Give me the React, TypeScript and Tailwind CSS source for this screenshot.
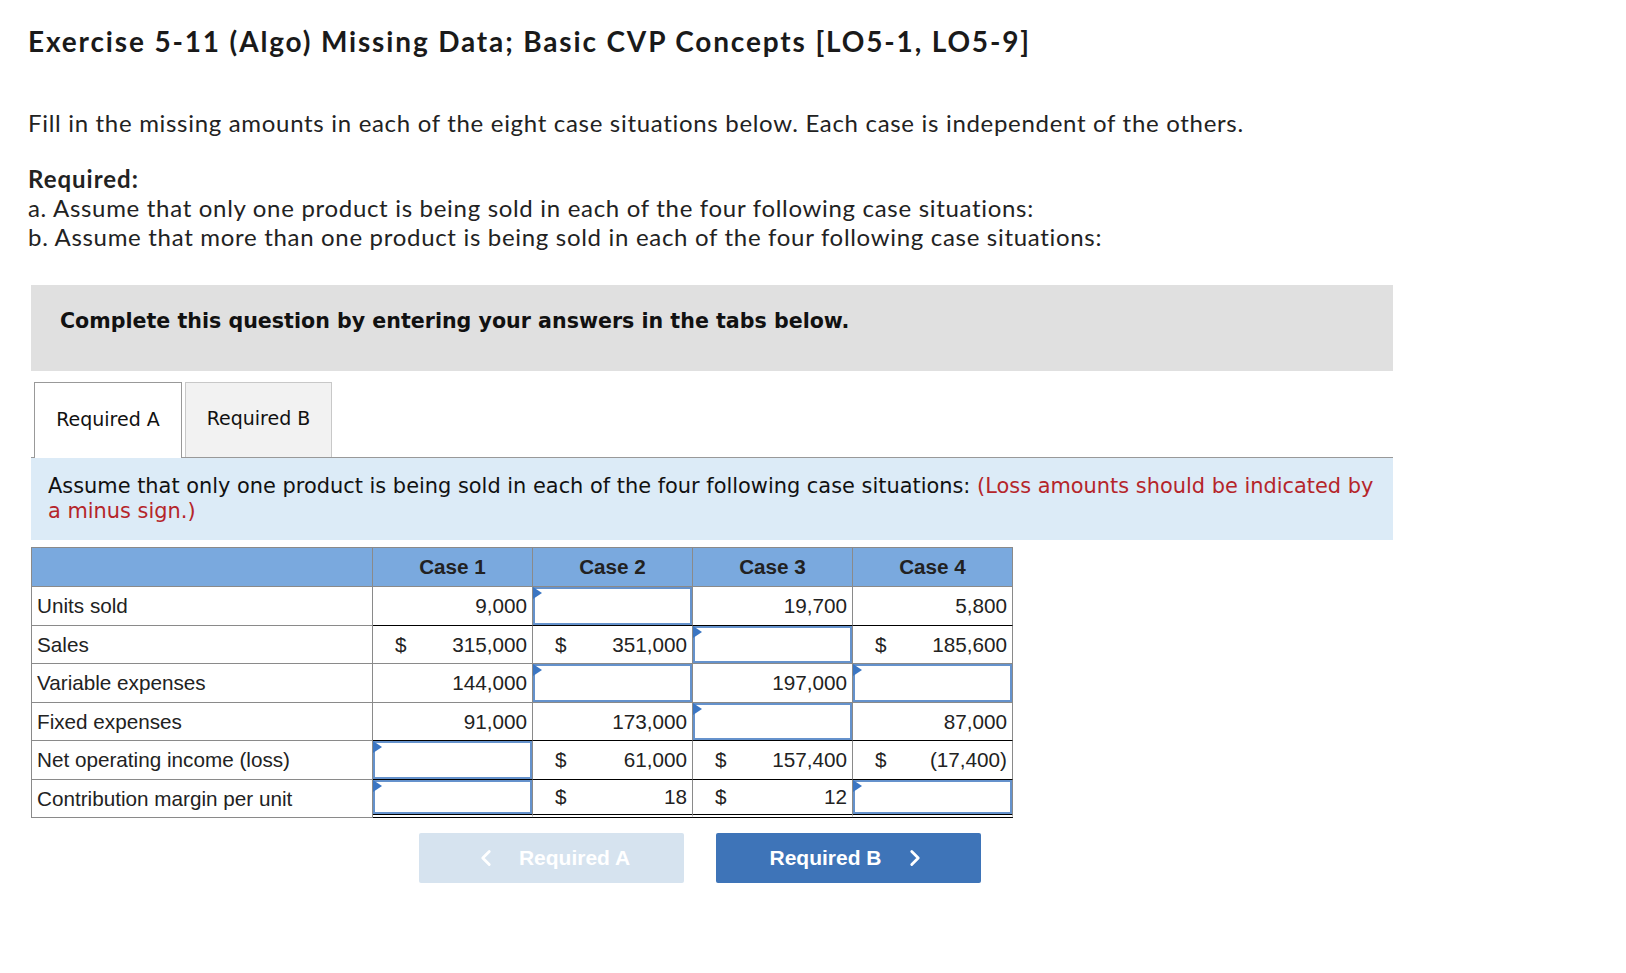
import { ChevronLeft, ChevronRight } from "lucide-react";

type Cell = { v?: string; dollar?: boolean; input?: boolean };
type Row = { label: string; cells: Cell[]; line: string };

// line = border style under the case cells of that row
const rows: Row[] = [
  {
    label: "Units sold",
    line: "border-b-black",
    cells: [{ v: "9,000" }, { input: true }, { v: "19,700" }, { v: "5,800" }],
  },
  {
    label: "Sales",
    line: "border-b-[#8a8a8a]",
    cells: [
      { dollar: true, v: "315,000" },
      { dollar: true, v: "351,000" },
      { input: true },
      { dollar: true, v: "185,600" },
    ],
  },
  {
    label: "Variable expenses",
    line: "border-b-[#8a8a8a]",
    cells: [{ v: "144,000" }, { input: true }, { v: "197,000" }, { input: true }],
  },
  {
    label: "Fixed expenses",
    line: "border-b-black",
    cells: [{ v: "91,000" }, { v: "173,000" }, { input: true }, { v: "87,000" }],
  },
  {
    label: "Net operating income (loss)",
    line: "border-b-black",
    cells: [
      { input: true },
      { dollar: true, v: "61,000" },
      { dollar: true, v: "157,400" },
      { dollar: true, v: "(17,400)" },
    ],
  },
  {
    label: "Contribution margin per unit",
    line: "border-b-4 border-double border-b-black",
    cells: [{ input: true }, { dollar: true, v: "18" }, { dollar: true, v: "12" }, { input: true }],
  },
];

function InputBox() {
  return (
    <div className="relative h-full w-full border-2 border-[#6592cc] bg-white">
      <div className="absolute -left-[2px] -top-[2px] h-0 w-0 border-y-[6px] border-l-[9px] border-y-transparent border-l-[#3b76c3]" />
    </div>
  );
}

function CaseCell({ cell, line }: { cell: Cell; line: string }) {
  if (cell.input) {
    return (
      <div className={`h-[38.5px] border-b border-r border-r-[#8a8a8a] ${line}`}>
        <InputBox />
      </div>
    );
  }
  return (
    <div
      className={`flex h-[38.5px] items-center border-b border-r border-r-[#8a8a8a] pl-[22px] pr-[5px] ${line}`}
    >
      {cell.dollar && <span>$</span>}
      <span className="ml-auto">{cell.v}</span>
    </div>
  );
}

export default function App() {
  return (
    <div className="min-h-screen bg-white px-[28px] pt-[24px] text-[#222]">
      <h1 className="font-['Lato',sans-serif] text-[28px] font-bold leading-[34px] tracking-[1.85px] text-[#1a1a1a]">
        Exercise 5-11 (Algo) Missing Data; Basic CVP Concepts [LO5-1, LO5-9]
      </h1>

      <div className="mt-[50px] font-['Lato',sans-serif] text-[24px] leading-[29px] tracking-[0.69px]">
        <p>
          Fill in the missing amounts in each of the eight case situations below. Each case is
          independent of the others.
        </p>
        <p className="mt-[27px] font-bold tracking-[1px]">Required:</p>
        <p>a. Assume that only one product is being sold in each of the four following case situations:</p>
        <p>b. Assume that more than one product is being sold in each of the four following case situations:</p>
      </div>

      <div className="ml-[3px] mt-[34px] w-[1362px]">
        <div className="h-[86px] bg-[#e0e0e0] pl-[29px] pt-[21px] font-['DejaVu_Sans',sans-serif] text-[20.6px] font-bold text-[#111]">
          Complete this question by entering your answers in the tabs below.
        </div>

        <div className="mt-[11px] flex items-end border-b border-[#999]">
          <div className="-mb-px ml-[3px] flex h-[76px] w-[148px] items-center justify-center pb-[3px] border border-b-0 border-[#999] bg-white font-['DejaVu_Sans',sans-serif] text-[19px] text-[#111]">
            Required A
          </div>
          <div className="ml-[3px] flex h-[75px] w-[147px] items-center justify-center pb-[3px] border border-b-0 border-[#c8c8c8] bg-[#f2f2f2] font-['DejaVu_Sans',sans-serif] text-[19px] text-[#111]">
            Required B
          </div>
        </div>

        <div className="bg-[#dcebf7] pb-[16px] pl-[17px] pr-[4px] pt-[16px] font-['DejaVu_Sans',sans-serif] text-[20.9px] leading-[25px] text-[#111]">
          <span className="whitespace-nowrap">
            Assume that only one product is being sold in each of the four following case situations:{" "}
            <span className="text-[#b5252a]">(Loss amounts should be indicated by</span>
          </span>
          <br />
          <span className="text-[#b5252a]">a minus sign.)</span>
        </div>

        <div className="mt-[7px] w-[982px] border-l border-t border-[#8a8a8a] font-['Liberation_Sans',Arial,sans-serif] text-[20.7px] text-[#222]">
          <div className="grid grid-cols-[341px_160px_160px_160px_160px]">
            <div className="h-[39px] border-b border-r border-[#8a8a8a] bg-[#7aa9de]" />
            {["Case 1", "Case 2", "Case 3", "Case 4"].map((c) => (
              <div
                key={c}
                className="flex h-[39px] items-center justify-center border-b border-r border-[#8a8a8a] bg-[#7aa9de] font-bold"
              >
                {c}
              </div>
            ))}

            {rows.map((r) => (
              <div key={r.label} className="contents">
                <div className="flex h-[38.5px] items-center border-b border-r border-[#8a8a8a] pl-[5px]">
                  {r.label}
                </div>
                {r.cells.map((cell, i) => (
                  <CaseCell key={i} cell={cell} line={r.line} />
                ))}
              </div>
            ))}
          </div>
        </div>
      </div>

      <div className="ml-[391px] mt-[15px] flex gap-[32px] font-['Liberation_Sans',Arial,sans-serif] text-[21px] font-bold text-white">
        <button className="flex h-[50px] w-[265px] items-center justify-center gap-[20px] rounded-[2px] bg-[#d6e3ef]">
          <ChevronLeft size={26} strokeWidth={2.6} />
          Required A
        </button>
        <button className="flex h-[50px] w-[265px] items-center justify-center gap-[20px] rounded-[2px] bg-[#3e74b8]">
          Required B
          <ChevronRight size={26} strokeWidth={2.6} />
        </button>
      </div>
    </div>
  );
}
